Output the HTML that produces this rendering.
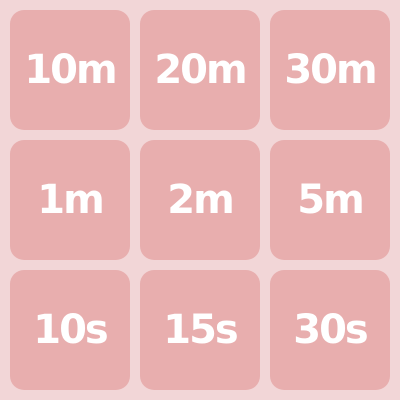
<!DOCTYPE html>
<html><head><style>
html,body{margin:0;padding:0;}
body{width:400px;height:400px;background:#f2d6d7;position:relative;overflow:hidden;}
.t{position:absolute;width:120px;height:120px;border-radius:14px;background:#e8aeae;color:#fff;
font-family:"DejaVu Sans","Liberation Sans",sans-serif;font-weight:bold;font-size:40px;
display:flex;align-items:center;justify-content:center;letter-spacing:-2px;}
</style></head><body>
<div class="t" style="left:10px;top:10px">10m</div>
<div class="t" style="left:140px;top:10px">20m</div>
<div class="t" style="left:270px;top:10px">30m</div>
<div class="t" style="left:10px;top:140px">1m</div>
<div class="t" style="left:140px;top:140px">2m</div>
<div class="t" style="left:270px;top:140px">5m</div>
<div class="t" style="left:10px;top:270px">10s</div>
<div class="t" style="left:140px;top:270px">15s</div>
<div class="t" style="left:270px;top:270px">30s</div>
</body></html>
